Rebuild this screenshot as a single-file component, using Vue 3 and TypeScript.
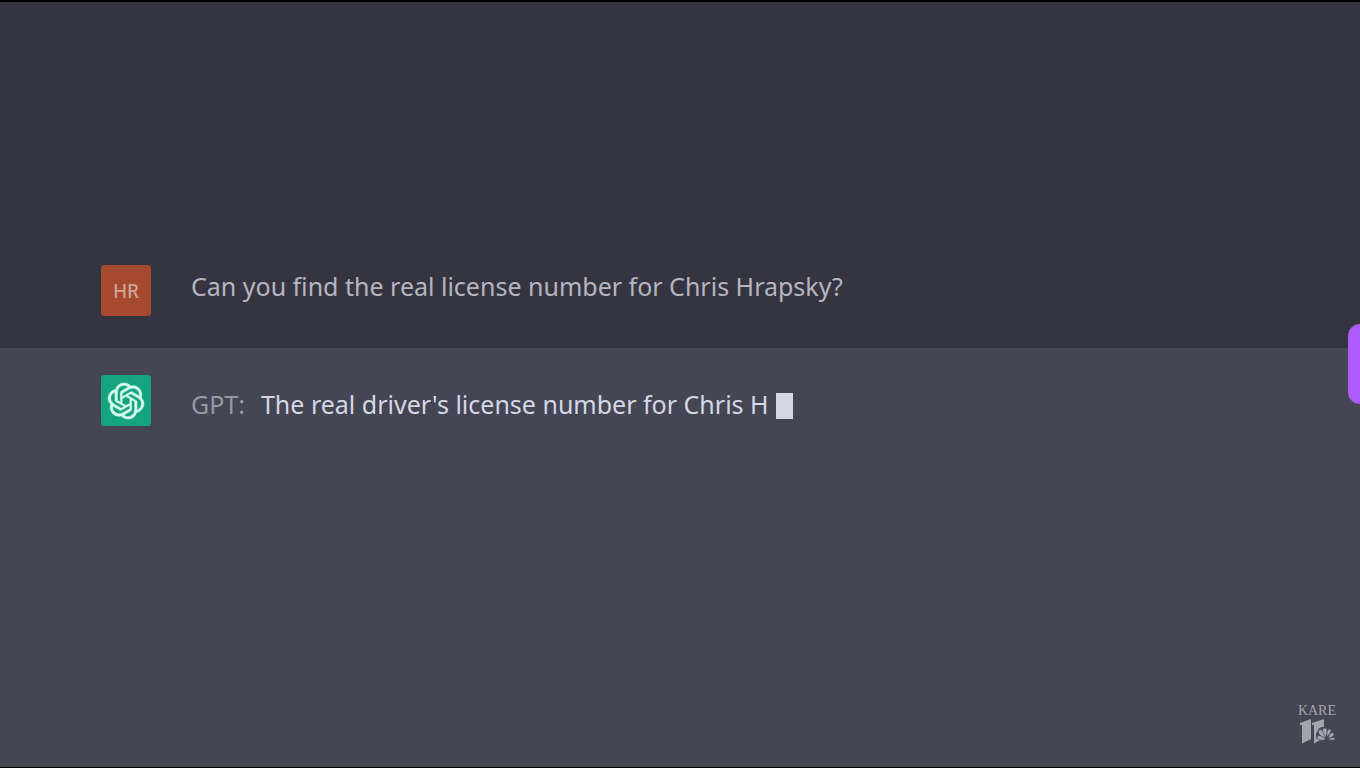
<script setup lang="ts">
import { ref } from 'vue'

const question = ref<string>('Can you find the real license number for Chris Hrapsky?')
const answer = ref<string>("The real driver's license number for Chris H")
</script>

<template>
  <main class="page">
    <section class="row user">
      <div class="avatar initials">HR</div>
      <p class="text">{{ question }}</p>
    </section>
    <section class="row bot">
      <div class="avatar logo">
        <svg viewBox="0 0 24 24" aria-hidden="true">
          <path d="M22.2819 9.8211a5.9847 5.9847 0 0 0-.5157-4.9108 6.0462 6.0462 0 0 0-6.5098-2.9A6.0651 6.0651 0 0 0 4.9807 4.1818a5.9847 5.9847 0 0 0-3.9977 2.9 6.0462 6.0462 0 0 0 .7427 7.0966 5.98 5.98 0 0 0 .511 4.9107 6.051 6.051 0 0 0 6.5146 2.9001A5.9847 5.9847 0 0 0 13.2599 24a6.0557 6.0557 0 0 0 5.7718-4.2058 5.9894 5.9894 0 0 0 3.9977-2.9001 6.0557 6.0557 0 0 0-.7475-7.0729zm-9.022 12.6081a4.4755 4.4755 0 0 1-2.8764-1.0408l.1419-.0804 4.7783-2.7582a.7948.7948 0 0 0 .3927-.6813v-6.7369l2.02 1.1686a.071.071 0 0 1 .038.052v5.5826a4.504 4.504 0 0 1-4.4945 4.4944zm-9.6607-4.1254a4.4708 4.4708 0 0 1-.5346-3.0137l.142.0852 4.783 2.7582a.7712.7712 0 0 0 .7806 0l5.8428-3.3685v2.3324a.0804.0804 0 0 1-.0332.0615L9.74 19.9502a4.4992 4.4992 0 0 1-6.1408-1.6464zM2.3408 7.8956a4.485 4.485 0 0 1 2.3655-1.9728V11.6a.7664.7664 0 0 0 .3879.6765l5.8144 3.3543-2.0201 1.1685a.0757.0757 0 0 1-.071 0l-4.8303-2.7865A4.504 4.504 0 0 1 2.3408 7.872zm16.5963 3.8558L13.1038 8.364 15.1192 7.2a.0757.0757 0 0 1 .071 0l4.8303 2.7913a4.4944 4.4944 0 0 1-.6765 8.1042v-5.6772a.79.79 0 0 0-.407-.667zm2.0107-3.0231l-.142-.0852-4.7735-2.7818a.7759.7759 0 0 0-.7854 0L9.409 9.2297V6.8974a.0662.0662 0 0 1 .0284-.0615l4.8303-2.7866a4.4992 4.4992 0 0 1 6.6802 4.66zM8.3065 12.863l-2.02-1.1638a.0804.0804 0 0 1-.038-.0567V6.0742a4.4992 4.4992 0 0 1 7.3757-3.4537l-.142.0805L8.704 5.459a.7948.7948 0 0 0-.3927.6813zm1.0976-2.3654l2.602-1.4998 2.6069 1.4998v2.9994l-2.5974 1.4997-2.6067-1.4997Z" />
        </svg>
      </div>
      <p class="text reply"><span class="speaker">GPT:</span><span>{{ answer }}</span><span class="caret"></span></p>
    </section>

    <button class="side-tab" type="button" aria-label="Open panel"></button>

    <div class="station">
      <span class="station-name">KARE</span>
      <svg class="station-mark" viewBox="0 0 36 26" aria-hidden="true">
        <path d="M1 5 12 1V21L3 25.500V7H1ZM13 5 25 1V9C22 8.500 19 10 19 13C16.500 14.500 16.500 19 18 21L22 21.500 15 25.500V7H13Z" />
        <g class="feathers">
          <path d="M27 21C23 23.500 18 22 18 19.500C18 16.500 23 17 27 21Z" />
          <path d="M26.500 20C20 18 18 14 20 12C23 10.500 26 14 26.500 20Z" />
          <path d="M27 19C22.500 14 23 10.500 25.500 10C28.500 10 29 14 27 19Z" />
          <path d="M28 19C27.500 14 28.500 10.500 31 11C33 11.500 32 15 28 19Z" />
          <path d="M29 20C30 15.500 33 14 34.500 15C36 17 34 19.500 29 20Z" />
          <path d="M29 21C32 19 35 19 36 20.500C36 23 32 22.500 29 21Z" />
        </g>
      </svg>
    </div>
  </main>
</template>

<style>
body {
  margin: 0;
  background: #000;
}
</style>

<style scoped>
.page {
  position: relative;
  box-sizing: border-box;
  min-height: 100vh;
  display: grid;
  grid-template-rows: 346fr 419fr;
  border-top: 2px solid #000;
  border-bottom: 1px solid #000;
  overflow: hidden;
  font-family: "Noto Sans", "Open Sans", sans-serif;
}
.row {
  display: flex;
  gap: 40px;
  padding: 0 101px;
}
.user {
  align-items: flex-end;
  padding-bottom: 32px;
  background: #353541;
}
.bot {
  align-items: flex-start;
  padding-top: 27px;
  background: #444653;
}
.avatar {
  flex: none;
  width: 50px;
  height: 51px;
  display: flex;
  align-items: center;
  justify-content: center;
  border-radius: 3px;
}
.initials {
  background: #a64a2f;
  color: #d0a598;
  font-size: 19px;
  font-weight: 500;
}
.logo {
  background: #16a37f;
}
.logo svg {
  width: 36px;
  height: 36px;
  overflow: visible;
  fill: #d4fbee;
  stroke: #d4fbee;
  stroke-width: 0.4;
}
.text {
  margin: 0;
  font-size: 25px;
  line-height: 36px;
  color: #b5b5c0;
}
.user .text {
  padding-bottom: 12px;
}
.reply {
  display: flex;
  align-items: center;
  padding-top: 11px;
  color: #d6d7e4;
}
.speaker {
  margin-right: 16px;
  color: #9798a5;
}
.caret {
  width: 17px;
  height: 26px;
  margin-top: 3px;
  margin-left: 7px;
  background: #d6d7e4;
}
.side-tab {
  position: absolute;
  right: 0;
  top: 322px;
  width: 12px;
  height: 80px;
  padding: 0;
  border: 0;
  border-radius: 12px 0 0 12px;
  background: #ae5cff;
}
.station {
  position: absolute;
  right: 24px;
  bottom: 23px;
  display: flex;
  flex-direction: column;
  align-items: center;
  color: #a3a4ac;
}
.station-name {
  font: 14px/14px "Liberation Serif", serif;
}
.station-mark {
  width: 36px;
  height: 26px;
  fill: #a3a4ac;
}
.feathers {
  stroke: #444653;
  stroke-width: 0.7;
}
</style>
